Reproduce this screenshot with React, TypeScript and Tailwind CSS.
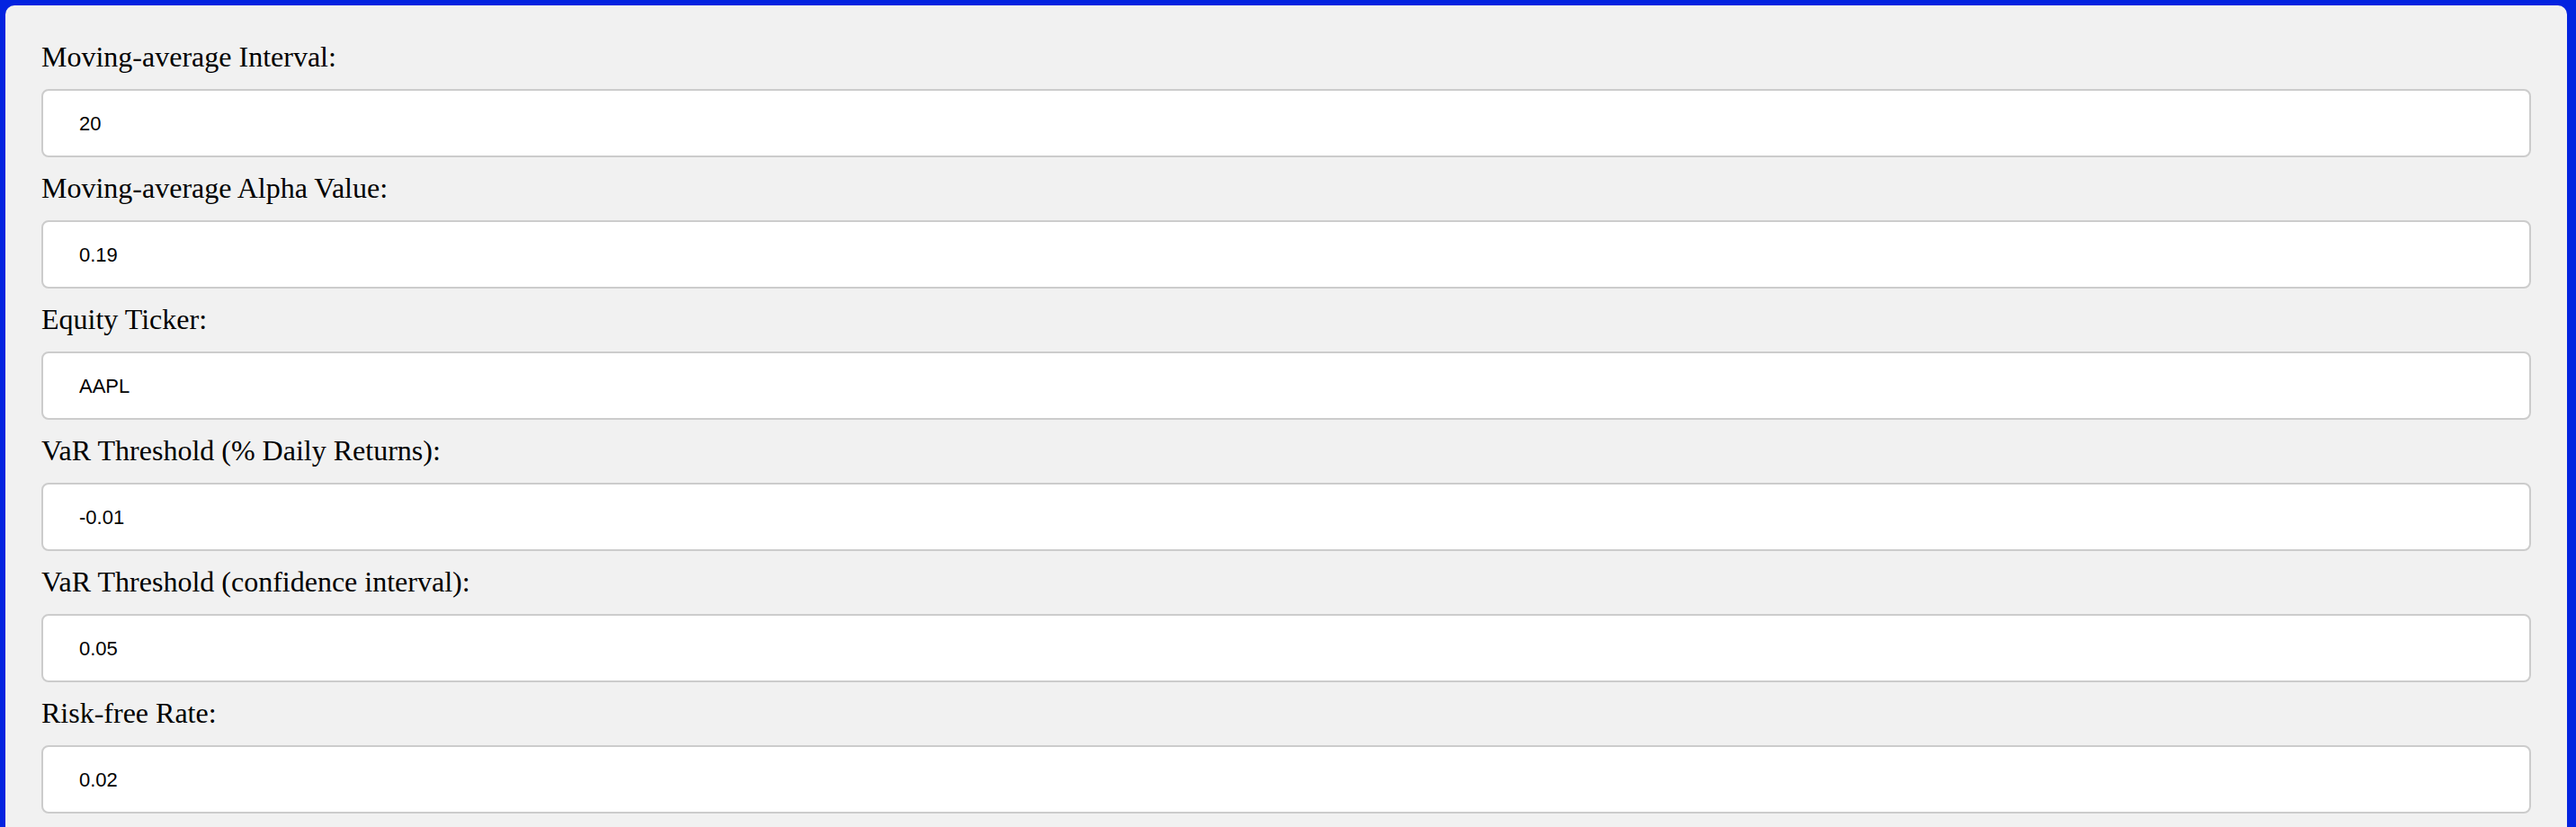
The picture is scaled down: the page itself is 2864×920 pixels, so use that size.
import React from 'react';

const fields = [
  { label: 'Moving-average Interval:', value: '20' },
  { label: 'Moving-average Alpha Value:', value: '0.19' },
  { label: 'Equity Ticker:', value: 'AAPL' },
  { label: 'VaR Threshold (% Daily Returns):', value: '-0.01' },
  { label: 'VaR Threshold (confidence interval):', value: '0.05' },
  { label: 'Risk-free Rate:', value: '0.02' },
];

const App: React.FC = () => {
  return (
    <div className="min-h-screen bg-[#0323e0] pt-[6px] pl-[6px] pr-[10px]">
      <div className="min-h-[914px] rounded-t-[10px] bg-[#f1f1f1] px-[40px] pt-[39px]">
        {fields.map((f) => (
          <div key={f.label} className="mb-[16px]">
            <label className="block mb-[18px] text-[32px] leading-[36px] text-black font-['Liberation_Serif','Times_New_Roman',serif]">
              {f.label}
            </label>
            <input
              type="text"
              readOnly
              value={f.value}
              className="block w-full h-[76px] rounded-[8px] border-2 border-[#cccccc] bg-white pl-[40px] pt-[2px] text-[22px] text-black outline-none font-['Liberation_Sans',Arial,sans-serif]"
            />
          </div>
        ))}
      </div>
    </div>
  );
};

export default App;
